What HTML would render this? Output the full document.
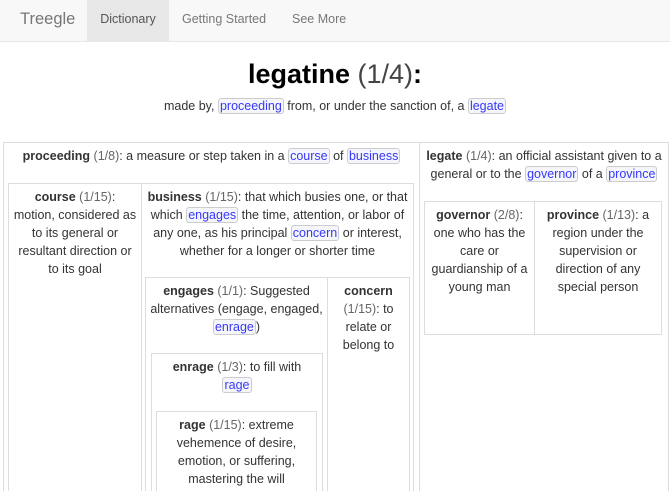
<!DOCTYPE html>
<html style="overflow:hidden;height:491px"><head><meta charset="utf-8"><style>
*{box-sizing:border-box;margin:0;padding:0}
body{width:670px;height:491px;overflow:hidden;background:#fff;font-family:"Liberation Sans",sans-serif;font-size:12.5px;color:#333;position:relative}
.nav{position:absolute;left:0;top:0;width:670px;height:42px;background:#f8f8f8;border-bottom:1px solid #e7e7e7}
.nav span{position:absolute;top:0;line-height:39px;color:#777}
.b{position:absolute;border:1px solid #ddd}
.o{border-bottom:none}
.t{position:absolute;text-align:center;line-height:18px;white-space:nowrap}
b{color:#333}
i{font-style:normal;color:#666}
a{color:#3838f8;text-decoration:none;border:1px solid #ccc;border-radius:3px;background:#f4f6fb;padding:0 1px}
</style></head><body>
<div class="nav">
<span style="left:20px;font-size:16.5px">Treegle</span>
<span style="left:87px;width:82px;height:41px;background:#e7e7e7;text-align:center;font-size:12.5px;color:#555">Dictionary</span>
<span style="left:182px;font-size:12.5px">Getting Started</span>
<span style="left:292px;font-size:12.5px">See More</span>
</div>
<div class="t" style="left:0;width:670px;top:57px;font-size:27px;line-height:34px;color:#000"><b style="color:#000">legatine</b> <i style="color:#444">(1/4)</i><b style="color:#000">:</b></div>
<div class="t" style="left:0;width:670px;top:97px">made by, <a>proceeding</a> from, or under the sanction of, a <a>legate</a></div>

<div class="b o" style="left:3px;top:142px;width:417px;height:349px"></div>
<div class="b o" style="left:419px;top:142px;width:250px;height:349px"></div>
<div class="t" style="left:3px;width:417px;top:147px"><b>proceeding</b> <i>(1/8)</i>: a measure or step taken in a <a>course</a> of <a>business</a></div>

<div class="b o" style="left:8px;top:183px;width:134px;height:308px"></div>
<div class="t" style="left:8px;width:134px;top:188px"><b>course</b> <i>(1/15)</i>:<br>motion, considered as<br>to its general or<br>resultant direction or<br>to its goal</div>
<div class="b o" style="left:141px;top:183px;width:273px;height:308px"></div>
<div class="t" style="left:141px;width:273px;top:188px"><b>business</b> <i>(1/15)</i>: that which busies one, or that<br>which <a>engages</a> the time, attention, or labor of<br>any one, as his principal <a>concern</a> or interest,<br>whether for a longer or shorter time</div>

<div class="b o" style="left:145px;top:277px;width:183px;height:214px"></div>
<div class="t" style="left:145px;width:183px;top:282px"><b>engages</b> <i>(1/1)</i>: Suggested<br>alternatives (engage, engaged,<br><a>enrage</a>)</div>
<div class="b o" style="left:327px;top:277px;width:83px;height:214px"></div>
<div class="t" style="left:327px;width:83px;top:282px"><b>concern</b><br><i>(1/15)</i>: to<br>relate or<br>belong to</div>

<div class="b o" style="left:151px;top:353px;width:172px;height:138px"></div>
<div class="t" style="left:151px;width:172px;top:358px"><b>enrage</b> <i>(1/3)</i>: to fill with<br><a>rage</a></div>
<div class="b o" style="left:156px;top:411px;width:161px;height:80px"></div>
<div class="t" style="left:156px;width:161px;top:416px"><b>rage</b> <i>(1/15)</i>: extreme<br>vehemence of desire,<br>emotion, or suffering,<br>mastering the will</div>

<div class="t" style="left:419px;width:250px;top:147px"><b>legate</b> <i>(1/4)</i>: an official assistant given to a<br>general or to the <a>governor</a> of a <a>province</a></div>
<div class="b" style="left:424px;top:201px;width:111px;height:134px"></div>
<div class="t" style="left:424px;width:111px;top:206px"><b>governor</b> <i>(2/8)</i>:<br>one who has the<br>care or<br>guardianship of a<br>young man</div>
<div class="b" style="left:534px;top:201px;width:128px;height:134px"></div>
<div class="t" style="left:534px;width:128px;top:206px"><b>province</b> <i>(1/13)</i>: a<br>region under the<br>supervision or<br>direction of any<br>special person</div>
</body></html>
